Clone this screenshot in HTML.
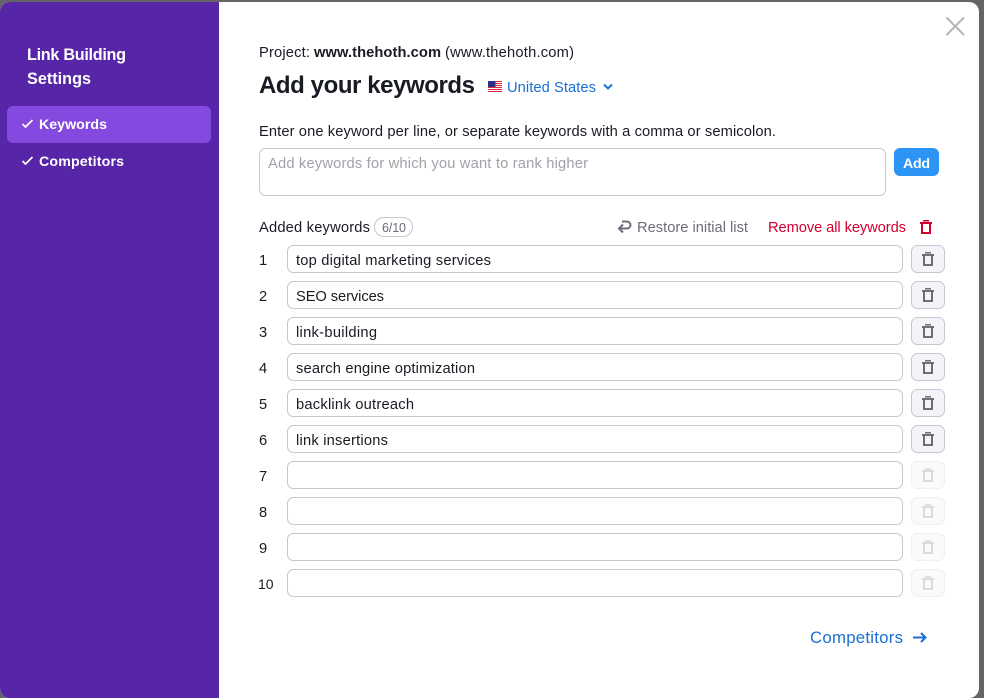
<!DOCTYPE html>
<html lang="en">
<head>
<meta charset="utf-8">
<title>Link Building Settings</title>
<style>
html,body{margin:0;padding:0;width:984px;height:697px;overflow:hidden;background:#646468}
#modal{position:absolute;left:0;top:2px;width:979px;height:696px;background:#fff;border-radius:10px;overflow:hidden}
#side{position:absolute;left:0;top:0;width:219px;height:696px;background:#5625a8}
svg{position:absolute;left:0;top:0}
text{font-family:"Liberation Sans",Arial,sans-serif;font-size:14.7px;fill:#191b23}
.b{font-weight:700}
.w{fill:#fff;font-weight:700;font-size:14.2px}
.g{fill:#6c6e79}
.box{fill:#fff;stroke:#c4c7cf;stroke-width:1}
</style>
</head>
<body>
<div id="modal"><div id="side"></div></div>
<svg width="984" height="697" viewBox="0 0 984 697" xmlns="http://www.w3.org/2000/svg">
<defs>
<symbol id="t" viewBox="0 0 12 14" width="12" height="14" overflow="visible">
<path fill="currentColor" d="M3 0h6v1.500H3zM0 2h12v2H0zM1 4h2v8H1zM9 4h2v8H9zM1 12h10v2H1z"/>
</symbol>
</defs>

<!-- sidebar -->
<text class="w" x="27" y="60" style="font-size:16.200px" textLength="99" lengthAdjust="spacing">Link Building</text>
<text class="w" x="27" y="84" style="font-size:16.200px" textLength="64" lengthAdjust="spacing">Settings</text>
<rect x="7" y="106" width="204" height="37" rx="6" fill="#8449df"/>
<path d="M22.500 124l3 3 7-7" fill="none" stroke="#fff" stroke-width="1.700"/>
<text class="w" x="39" y="129" textLength="68" lengthAdjust="spacing">Keywords</text>
<path d="M22.500 161l3 3 7-7" fill="none" stroke="#fff" stroke-width="1.700"/>
<text class="w" x="39" y="166" textLength="85" lengthAdjust="spacing">Competitors</text>

<!-- close -->
<path d="M946.500 17.500l17.500 17.500M964 17.500L946.500 35" fill="none" stroke="#b4b5b8" stroke-width="2"/>

<!-- header -->
<text x="259" y="57" textLength="51" lengthAdjust="spacing">Project:</text>
<text class="b" x="314" y="57" textLength="127" lengthAdjust="spacing">www.thehoth.com</text>
<text x="445" y="57" textLength="129" lengthAdjust="spacing">(www.thehoth.com)</text>
<text class="b" x="259" y="93" style="font-size:24px" textLength="216" lengthAdjust="spacing">Add your keywords</text>

<!-- flag -->
<rect x="488" y="81" width="14" height="11" fill="#fff"/>
<path d="M488 81.500h14M488 83.500h14M488 85.500h14M488 87.500h14M488 89.500h14M488 91.500h14" stroke="#d8283c" stroke-width="1"/>
<rect x="488" y="81" width="7.500" height="6" fill="#2b2f86"/>
<text x="507" y="92" style="fill:#1a6fd4" textLength="89" lengthAdjust="spacing">United States</text>
<path d="M604 84.500l4 4 4-4" fill="none" stroke="#1a6fd4" stroke-width="2"/>

<!-- input -->
<text x="259" y="136" textLength="517" lengthAdjust="spacing">Enter one keyword per line, or separate keywords with a comma or semicolon.</text>
<rect class="box" x="259.500" y="148.500" width="626" height="47" rx="6"/>
<text x="268" y="168" style="fill:#a0a2a9" textLength="320" lengthAdjust="spacing">Add keywords for which you want to rank higher</text>
<rect x="894" y="148" width="45" height="28" rx="6" fill="#2b94f5"/>
<text class="w" x="903" y="168" textLength="27" lengthAdjust="spacing">Add</text>

<!-- list header -->
<text x="259" y="232" textLength="111" lengthAdjust="spacing">Added keywords</text>
<rect x="374.500" y="217.500" width="38" height="19" rx="9.500" fill="#fff" stroke="#c4c7cf"/>
<text class="g" x="382" y="232" style="font-size:12.500px" textLength="24" lengthAdjust="spacing">6/10</text>
<path d="M622 221.500h5a3.500 3.500 0 0 1 0 7H619M623 224.500l-4 4 4 4" fill="none" stroke="#6c6e79" stroke-width="2"/>
<text class="g" x="637" y="232" textLength="111" lengthAdjust="spacing">Restore initial list</text>
<text x="768" y="232" style="fill:#d1002f" textLength="138" lengthAdjust="spacing">Remove all keywords</text>
<use href="#t" x="920" y="220" style="color:#d1002f"/>

<!-- row 1 -->
<text x="259" y="265" textLength="7" lengthAdjust="spacing">1</text>
<rect class="box" x="287.500" y="245.500" width="615" height="27" rx="6"/>
<text x="296" y="265" textLength="195" lengthAdjust="spacing">top digital marketing services</text>
<rect x="911.500" y="245.500" width="33" height="27" rx="6" fill="#f4f4f8" stroke="#c4c7cf"/>
<use href="#t" x="922" y="252" style="color:#6c6e79"/>

<!-- row 2 -->
<text x="259" y="301" textLength="8" lengthAdjust="spacing">2</text>
<rect class="box" x="287.500" y="281.500" width="615" height="27" rx="6"/>
<text x="296" y="301" textLength="88" lengthAdjust="spacing">SEO services</text>
<rect x="911.500" y="281.500" width="33" height="27" rx="6" fill="#f4f4f8" stroke="#c4c7cf"/>
<use href="#t" x="922" y="288" style="color:#6c6e79"/>

<!-- row 3 -->
<text x="259" y="337" textLength="8" lengthAdjust="spacing">3</text>
<rect class="box" x="287.500" y="317.500" width="615" height="27" rx="6"/>
<text x="296" y="337" textLength="81" lengthAdjust="spacing">link-building</text>
<rect x="911.500" y="317.500" width="33" height="27" rx="6" fill="#f4f4f8" stroke="#c4c7cf"/>
<use href="#t" x="922" y="324" style="color:#6c6e79"/>

<!-- row 4 -->
<text x="259" y="373" textLength="8" lengthAdjust="spacing">4</text>
<rect class="box" x="287.500" y="353.500" width="615" height="27" rx="6"/>
<text x="296" y="373" textLength="179" lengthAdjust="spacing">search engine optimization</text>
<rect x="911.500" y="353.500" width="33" height="27" rx="6" fill="#f4f4f8" stroke="#c4c7cf"/>
<use href="#t" x="922" y="360" style="color:#6c6e79"/>

<!-- row 5 -->
<text x="259" y="409" textLength="8" lengthAdjust="spacing">5</text>
<rect class="box" x="287.500" y="389.500" width="615" height="27" rx="6"/>
<text x="296" y="409" textLength="118" lengthAdjust="spacing">backlink outreach</text>
<rect x="911.500" y="389.500" width="33" height="27" rx="6" fill="#f4f4f8" stroke="#c4c7cf"/>
<use href="#t" x="922" y="396" style="color:#6c6e79"/>

<!-- row 6 -->
<text x="259" y="445" textLength="8" lengthAdjust="spacing">6</text>
<rect class="box" x="287.500" y="425.500" width="615" height="27" rx="6"/>
<text x="296" y="445" textLength="92" lengthAdjust="spacing">link insertions</text>
<rect x="911.500" y="425.500" width="33" height="27" rx="6" fill="#f4f4f8" stroke="#c4c7cf"/>
<use href="#t" x="922" y="432" style="color:#6c6e79"/>

<!-- row 7 -->
<text x="259" y="481" textLength="8" lengthAdjust="spacing">7</text>
<rect class="box" x="287.500" y="461.500" width="615" height="27" rx="6"/>
<rect x="911.500" y="461.500" width="33" height="27" rx="6" fill="#fafafb" stroke="#e6e7ea" stroke-dasharray="1.500 1"/>
<use href="#t" x="922" y="468" style="color:#d9dadd"/>

<!-- row 8 -->
<text x="259" y="517" textLength="8" lengthAdjust="spacing">8</text>
<rect class="box" x="287.500" y="497.500" width="615" height="27" rx="6"/>
<rect x="911.500" y="497.500" width="33" height="27" rx="6" fill="#fafafb" stroke="#e6e7ea" stroke-dasharray="1.500 1"/>
<use href="#t" x="922" y="504" style="color:#d9dadd"/>

<!-- row 9 -->
<text x="259" y="553" textLength="8" lengthAdjust="spacing">9</text>
<rect class="box" x="287.500" y="533.500" width="615" height="27" rx="6"/>
<rect x="911.500" y="533.500" width="33" height="27" rx="6" fill="#fafafb" stroke="#e6e7ea" stroke-dasharray="1.500 1"/>
<use href="#t" x="922" y="540" style="color:#d9dadd"/>

<!-- row 10 -->
<text x="258" y="589" style="font-size:14px">10</text>
<rect class="box" x="287.500" y="569.500" width="615" height="27" rx="6"/>
<rect x="911.500" y="569.500" width="33" height="27" rx="6" fill="#fafafb" stroke="#e6e7ea" stroke-dasharray="1.500 1"/>
<use href="#t" x="922" y="576" style="color:#d9dadd"/>

<!-- footer link -->
<text x="810" y="643" style="font-size:16.800px;fill:#1a6fd4" textLength="93" lengthAdjust="spacing">Competitors</text>
<path d="M913 637.500h12.500M921 633l4.500 4.500-4.500 4.500" fill="none" stroke="#1a6fd4" stroke-width="2"/>
</svg>
</body>
</html>
